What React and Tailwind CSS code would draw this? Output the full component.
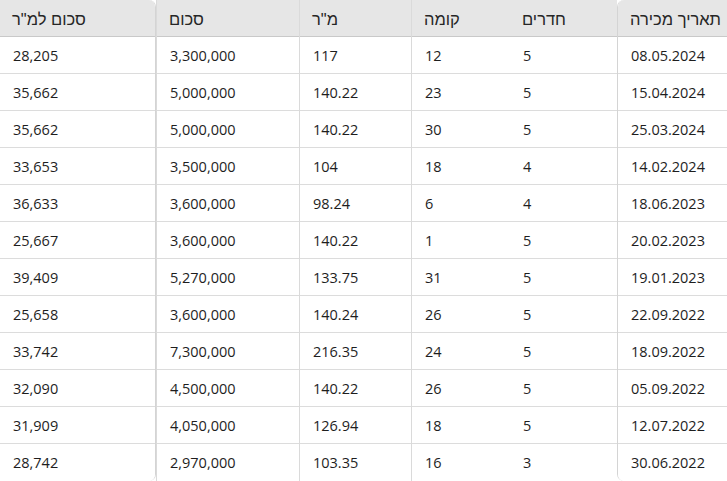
import React from 'react';

const rows = [
  ['08.05.2024', '5', '12', '117', '3,300,000', '28,205'],
  ['15.04.2024', '5', '23', '140.22', '5,000,000', '35,662'],
  ['25.03.2024', '5', '30', '140.22', '5,000,000', '35,662'],
  ['14.02.2024', '4', '18', '104', '3,500,000', '33,653'],
  ['18.06.2023', '4', '6', '98.24', '3,600,000', '36,633'],
  ['20.02.2023', '5', '1', '140.22', '3,600,000', '25,667'],
  ['19.01.2023', '5', '31', '133.75', '5,270,000', '39,409'],
  ['22.09.2022', '5', '26', '140.24', '3,600,000', '25,658'],
  ['18.09.2022', '5', '24', '216.35', '7,300,000', '33,742'],
  ['05.09.2022', '5', '26', '140.22', '4,500,000', '32,090'],
  ['12.07.2022', '5', '18', '126.94', '4,050,000', '31,909'],
  ['30.06.2022', '3', '16', '103.35', '2,970,000', '28,742'],
];

// right to left: date, rooms, floor, sqm, price, price per sqm
const columns = [
  { title: 'תאריך מכירה', width: 'w-[110px]', edge: 'border-l border-[#d4d4d4] rounded-l-[7px]' },
  { title: 'חדרים', width: 'w-[107px]', edge: '' },
  { title: 'קומה', width: 'w-[99px]', edge: 'border-l border-[#dadada]' },
  { title: 'מ"ר', width: 'w-[112px]', edge: 'border-l border-[#dadada]' },
  { title: 'סכום', width: 'w-[143px]', edge: 'border-l border-[#dadada]' },
  { title: 'סכום למ"ר', width: 'w-[156px]', edge: 'border-r border-[#d4d4d4] rounded-r-[7px]' },
];

function Column({ col, index }) {
  return (
    <div className={`${col.width} ${col.edge} shrink-0 flex flex-col overflow-hidden`}>
      <div
        className="h-[37px] shrink-0 bg-[#e6e6e6] border-b border-[#c9c9c9] flex items-center justify-end pl-[12px] pt-[3px] text-[16.5px] text-[#262626]"
        style={{ fontFamily: '"Liberation Sans", "DejaVu Sans", sans-serif' }}
      >
        <span className="whitespace-nowrap">{col.title}</span>
      </div>
      {rows.map((r, i) => (
        <div
          key={i}
          className={`h-[37px] shrink-0 flex items-center pl-[13px] pt-[2px] bg-white text-[#1e1e1e] ${i < rows.length - 1 ? 'border-b border-[#dcdcdc]' : ''}`}
        >
          <span dir="ltr" className="w-full text-left">{r[index]}</span>
        </div>
      ))}
    </div>
  );
}

export default function App() {
  return (
    <div
      dir="rtl"
      className="w-[727px] h-[481px] flex bg-white overflow-hidden text-[14.5px] leading-none"
      style={{ fontFamily: '"Open Sans", "DejaVu Sans", sans-serif' }}
    >
      {columns.map((col, i) => (
        <Column key={i} col={col} index={i} />
      ))}
    </div>
  );
}
